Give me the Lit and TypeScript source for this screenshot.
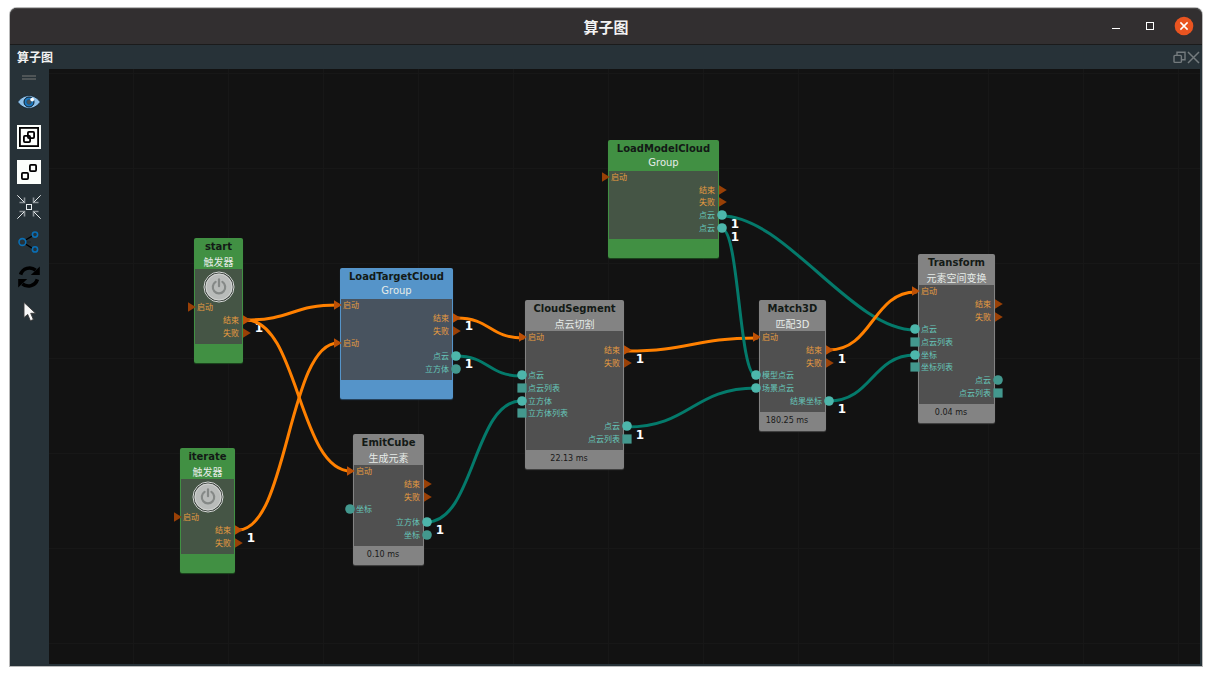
import { LitElement, html, svg, css, nothing } from "lit";
import { customElement, property } from "lit/decorators.js";
import { classMap } from "lit/directives/class-map.js";
import { styleMap } from "lit/directives/style-map.js";

type Side = "in" | "out";
type Shape = "flow" | "item" | "list";

interface Port {
  side: Side;
  shape: Shape;
  label: string;
  linked: boolean;
}

interface OperatorNode {
  x: number;
  y: number;
  width: number;
  theme: "green" | "blue" | "grey";
  name: string;
  kind: string;
  trigger?: boolean;
  time?: string;
  ports: Port[];
}

interface Wire {
  type: "flow" | "data";
  from: [number, number];
  to: [number, number];
}

const port = (side: Side, shape: Shape, label: string, linked = false): Port => ({ side, shape, label, linked });

const NODES: OperatorNode[] = [
  {
    x: 145, y: 169, width: 49, theme: "green", name: "start", kind: "触发器", trigger: true,
    ports: [port("in", "flow", "启动"), port("out", "flow", "结束", true), port("out", "flow", "失败")],
  },
  {
    x: 131, y: 379, width: 55, theme: "green", name: "iterate", kind: "触发器", trigger: true,
    ports: [port("in", "flow", "启动"), port("out", "flow", "结束", true), port("out", "flow", "失败")],
  },
  {
    x: 291, y: 199, width: 113, theme: "blue", name: "LoadTargetCloud", kind: "Group",
    ports: [
      port("in", "flow", "启动", true), port("out", "flow", "结束", true), port("out", "flow", "失败"),
      port("in", "flow", "启动", true), port("out", "item", "点云", true), port("out", "item", "立方体"),
    ],
  },
  {
    x: 304, y: 365, width: 71, theme: "grey", name: "EmitCube", kind: "生成元素", time: "0.10 ms",
    ports: [
      port("in", "flow", "启动", true), port("out", "flow", "结束"), port("out", "flow", "失败"),
      port("in", "item", "坐标"), port("out", "item", "立方体", true), port("out", "item", "坐标"),
    ],
  },
  {
    x: 476, y: 231, width: 99, theme: "grey", name: "CloudSegment", kind: "点云切割", time: "22.13 ms",
    ports: [
      port("in", "flow", "启动", true), port("out", "flow", "结束", true), port("out", "flow", "失败"),
      port("in", "item", "点云", true), port("in", "list", "点云列表"), port("in", "item", "立方体", true),
      port("in", "list", "立方体列表"), port("out", "item", "点云", true), port("out", "list", "点云列表"),
    ],
  },
  {
    x: 559, y: 71, width: 111, theme: "green", name: "LoadModelCloud", kind: "Group",
    ports: [
      port("in", "flow", "启动"), port("out", "flow", "结束"), port("out", "flow", "失败"),
      port("out", "item", "点云", true), port("out", "item", "点云", true),
    ],
  },
  {
    x: 710, y: 231, width: 67, theme: "grey", name: "Match3D", kind: "匹配3D", time: "180.25 ms",
    ports: [
      port("in", "flow", "启动", true), port("out", "flow", "结束", true), port("out", "flow", "失败"),
      port("in", "item", "模型点云", true), port("in", "item", "场景点云", true), port("out", "item", "结果坐标", true),
    ],
  },
  {
    x: 869, y: 185, width: 77, theme: "grey", name: "Transform", kind: "元素空间变换", time: "0.04 ms",
    ports: [
      port("in", "flow", "启动", true), port("out", "flow", "结束"), port("out", "flow", "失败"),
      port("in", "item", "点云", true), port("in", "list", "点云列表"), port("in", "item", "坐标", true),
      port("in", "list", "坐标列表"), port("out", "item", "点云"), port("out", "list", "点云列表"),
    ],
  },
];

const WIRES: Wire[] = [
  { type: "flow", from: [197, 251], to: [289, 236] },
  { type: "flow", from: [197, 251], to: [302, 402] },
  { type: "flow", from: [189, 461], to: [289, 274] },
  { type: "flow", from: [408, 249], to: [474, 269] },
  { type: "data", from: [407, 287], to: [472, 307] },
  { type: "data", from: [378, 453], to: [472, 332] },
  { type: "flow", from: [578, 282], to: [708, 269] },
  { type: "data", from: [578, 358], to: [707, 319] },
  { type: "data", from: [673, 147], to: [866, 261] },
  { type: "data", from: [673, 160], to: [707, 307] },
  { type: "flow", from: [780, 281], to: [867, 223] },
  { type: "data", from: [780, 332], to: [866, 286] },
];

const COUNTS: [number, number][] = [
  [210, 259], [202, 469], [420, 257], [420, 295], [391, 461], [591, 290],
  [591, 366], [686, 155], [686, 168], [793, 290], [793, 340],
];

const PORT_PITCH = 38 / 3;
const MAX_BEND = 63;

@customElement("operator-node")
class OperatorNodeElement extends LitElement {
  @property({ attribute: false }) data!: OperatorNode;

  static styles = css`
    :host { display: block; }
    .node {
      border-radius: 2px;
      background: var(--edge);
      box-shadow: 0 1px 1px var(--shade);
      display: flex;
      flex-direction: column;
    }
    .green { --edge: #419043; --fill: #455545; --shade: #1d4a1f; }
    .blue { --edge: #5594c9; --fill: #48535f; --shade: #2a4a66; }
    .grey { --edge: #838383; --fill: #505050; --shade: #464646; }
    .head {
      height: 31px;
      display: flex;
      flex-direction: column;
      align-items: center;
      white-space: nowrap;
      font-family: "DejaVu Sans", "Noto Sans CJK SC", sans-serif;
      font-size: 10px;
    }
    .name { margin: 0; padding-top: 2px; font-size: 10px; line-height: 14px; font-weight: 700; color: #131a16; }
    .kind { line-height: 14px; color: #e6ebe8; }
    .kind.cjk { line-height: 17px; }
    .body {
      margin: 0 1px;
      padding: 0 0 5px;
      background: var(--fill);
      display: flex;
      flex-direction: column;
      align-items: stretch;
    }
    .ports { list-style: none; margin: 0 -1px; padding: 0; display: grid; grid-auto-rows: 1fr; }
    .port { display: flex; align-items: center; min-height: 0; }
    .port.in { gap: 1px; margin-left: -8px; }
    .port.out { gap: 2px; flex-direction: row-reverse; margin-right: -8px; }
    .label {
      font-family: "Noto Sans CJK SC", sans-serif;
      font-size: 8px;
      line-height: 12px;
      white-space: nowrap;
      color: #66c6b9;
    }
    .flow .label { color: #e59b40; }
    .pin { display: block; width: 10px; height: 10px; flex: none; fill: #43988e; }
    .linked .pin { fill: #4db6ab; }
    .flow .pin { fill: #994006; }
    .flow.linked .pin { fill: #bd5005; }
    .power {
      align-self: center;
      margin: 2px 0 0;
      padding: 0;
      border: 0;
      background: none;
      width: 32px;
      height: 30px;
      display: flex;
      justify-content: center;
    }
    .power svg { width: 32px; height: 32px; flex: none; }
    .foot {
      height: 19px;
      padding-right: 11px;
      text-align: center;
      white-space: nowrap;
      font: 8px/18px "DejaVu Sans", sans-serif;
      color: #191919;
    }
  `;

  private pin(shape: Shape) {
    const glyph =
      shape === "flow"
        ? svg`<path d="M2 0.2L9.8 5L2 9.8z"/>`
        : shape === "item"
          ? svg`<circle cx="5" cy="5" r="4.8"/>`
          : svg`<path d="M0.4 0.4h9.2v9.2h-9.2z"/>`;
    return html`<svg class="pin" viewBox="0 0 10 10" aria-hidden="true">${glyph}</svg>`;
  }

  private power() {
    return html`<button class="power" aria-label=${this.data.name}>
      <svg viewBox="0 0 32 32" aria-hidden="true">
        <circle cx="16" cy="16" r="15" fill="#2c332e" stroke="#d9dcda" stroke-width="1"/>
        <circle cx="16" cy="16" r="13.6" fill="#a9aeaa"/>
        <circle cx="16" cy="16" r="13" fill="#b9bcba" stroke="#d2d4d2" stroke-width="1"/>
        <path d="M12.6 10.9a6.2 6.2 0 1 0 6.8 0" fill="none" stroke="#858987" stroke-width="2.2" stroke-linecap="round"/>
        <path d="M16 8.4v6.8" stroke="#858987" stroke-width="2.2" stroke-linecap="round"/>
      </svg>
    </button>`;
  }

  render() {
    const n = this.data;
    const cjk = n.kind !== "Group";
    return html`
      <article class="node ${n.theme}">
        <header class="head">
          <h2 class="name">${n.name}</h2>
          <span class=${classMap({ kind: true, cjk })}>${n.kind}</span>
        </header>
        <div class="body">
          ${n.trigger ? this.power() : nothing}
          <ul class="ports" style=${styleMap({ height: `${Math.round(n.ports.length * PORT_PITCH)}px` })}>
            ${n.ports.map(
              (p) => html`<li class=${classMap({ port: true, [p.side]: true, [p.shape]: true, linked: p.linked })}>
                ${this.pin(p.shape)}<span class="label">${p.label}</span>
              </li>`
            )}
          </ul>
        </div>
        <footer class="foot">${n.time ?? nothing}</footer>
      </article>
    `;
  }
}

@customElement("operator-graph")
class OperatorGraph extends LitElement {
  static styles = css`
    :host {
      display: block;
      position: relative;
      overflow: hidden;
      background-color: #121212;
      background-image:
        linear-gradient(to right, #171717 1px, transparent 1px),
        linear-gradient(to bottom, #171717 1px, transparent 1px);
      background-size: 95px 95px;
      background-position: 84px 4px;
    }
    .wires { position: absolute; inset: 0; width: 100%; height: 100%; }
    .wire { fill: none; stroke-width: 3; stroke-linecap: round; }
    .wire.flow { stroke: #ff8000; }
    .wire.data { stroke: #047a6b; }
    .count {
      position: absolute;
      transform: translate(-50%, -50%);
      font: 700 12px/14px "DejaVu Sans", sans-serif;
      color: #ffffff;
    }
    .slot { position: absolute; }
  `;

  private curve({ from: [x1, y1], to: [x2, y2] }: Wire) {
    const bend = Math.min((x2 - x1) / 2, MAX_BEND);
    return `M${x1} ${y1}C${x1 + bend} ${y1} ${x2 - bend} ${y2} ${x2} ${y2}`;
  }

  render() {
    return html`
      ${COUNTS.map(([x, y]) => html`<span class="count" style=${styleMap({ left: `${x}px`, top: `${y}px` })}>1</span>`)}
      <svg class="wires" aria-hidden="true">
        ${WIRES.map((w) => svg`<path class="wire ${w.type}" d=${this.curve(w)}/>`)}
      </svg>
      ${NODES.map(
        (n) => html`<operator-node
          class="slot"
          style=${styleMap({ left: `${n.x}px`, top: `${n.y}px`, width: `${n.width}px` })}
          .data=${n}
        ></operator-node>`
      )}
    `;
  }
}

const TOOLS = [
  {
    name: "显示",
    icon: svg`
      <path d="M0.6 12C4 7.6 8 5.6 12 5.6S20 7.6 23.4 12C20 16.4 16 18.4 12 18.4S4 16.4 0.6 12z" fill="#8fc0e8" stroke="#10202c" stroke-width="0.8"/>
      <circle cx="12" cy="12" r="5" fill="#1c78c0" stroke="#0d1c28" stroke-width="1"/>
      <circle cx="12" cy="12" r="2.4" fill="#4d5458" stroke="#14507e" stroke-width="0.6"/>
      <circle cx="15.2" cy="9.6" r="1.9" fill="#ffffff"/>`,
  },
  {
    name: "组合",
    icon: svg`
      <path d="M0 0h24v24H0z" fill="#fcfffc"/>
      <rect x="2.9" y="2.9" width="18.2" height="18.2" fill="none" stroke="#000" stroke-width="1.8"/>
      <rect x="6.9" y="10.9" width="6.2" height="6.2" rx="1" fill="none" stroke="#000" stroke-width="1.8"/>
      <rect x="10.9" y="6.9" width="6.2" height="6.2" rx="1" fill="none" stroke="#000" stroke-width="1.8"/>`,
  },
  {
    name: "解组",
    icon: svg`
      <path d="M0 0h24v24H0z" fill="#fcfffc"/>
      <rect x="4.9" y="12.9" width="6.2" height="6.2" rx="1" fill="none" stroke="#000" stroke-width="1.8"/>
      <rect x="12.9" y="4.9" width="6.2" height="6.2" rx="1" fill="none" stroke="#000" stroke-width="1.8"/>`,
  },
  {
    name: "居中",
    icon: svg`
      <path d="M7.5 2.5v5h-5M16.5 2.5v5h5M7.5 21.5v-5h-5M16.5 21.5v-5h5" fill="none" stroke="#8c9397" stroke-width="1.6"/>
      <g fill="none" stroke="#e8ecee" stroke-width="1">
        <rect x="9.5" y="9.5" width="5" height="5"/>
        <path d="M0.3 0.3l7 7M23.7 0.3l-7 7M0.3 23.7l7-7M23.7 23.7l-7-7"/>
      </g>`,
  },
  {
    name: "连接",
    icon: svg`
      <path d="M8.5 10l7-4.2M8.5 14l7 4.4" stroke="#000" stroke-width="1.4"/>
      <path d="M9.5 12h4.5" stroke="#10181c" stroke-width="1.2" stroke-dasharray="1 1"/>
      <g fill="none" stroke="#0a6fb5" stroke-width="1.6">
        <circle cx="5.4" cy="12" r="3.4"/>
        <circle cx="18" cy="4.6" r="2.6"/>
        <circle cx="18" cy="19.4" r="2.6"/>
      </g>`,
  },
  {
    name: "刷新",
    icon: svg`
      <path d="M3.6 9.6A9.4 9.4 0 0 1 18.6 5.2M20.4 14.4A9.4 9.4 0 0 1 5.4 18.8" fill="none" stroke="#000" stroke-width="3.6"/>
      <path d="M22.8 1.6V10h-9zM1.2 22.4V14h9z" fill="#000"/>`,
  },
  {
    name: "选择",
    icon: svg`
      <path d="M7 2.4v15.2l3.7-3.2 2.7 6.4 3-1.3-2.7-6.2h4.9z" fill="#f8f8f8" stroke="#3a3a3a" stroke-width="0.9" stroke-linejoin="round"/>`,
  },
];

@customElement("app-root")
class AppRoot extends LitElement {
  static styles = css`
    :host {
      display: block;
      box-sizing: border-box;
      height: 100vh;
      padding: 8px 10px 10px;
      background: #ffffff;
      font-family: "Noto Sans CJK SC", sans-serif;
      color: #f2f2f2;
    }
    .window {
      height: 100%;
      display: flex;
      flex-direction: column;
      background: #273238;
      border-radius: 7px 7px 0 0;
      box-shadow: 0 0 0 1px #b9b9b9;
    }
    .titlebar {
      height: 37px;
      box-sizing: border-box;
      border-bottom: 1px solid #1b1b1b;
      border-radius: 7px 7px 0 0;
      background: #322f30;
      box-shadow: inset 0 1px 0 #4b4949;
      display: grid;
      grid-template-columns: 1fr auto 1fr;
      align-items: center;
    }
    .title { grid-column: 2; margin: 0; font-size: 15px; line-height: 20px; font-weight: 700; padding-top: 2px; }
    .controls { display: flex; justify-content: flex-end; align-items: center; gap: 14px; padding-right: 8px; }
    button { padding: 0; border: 0; background: none; display: block; }
    .control { width: 20px; height: 20px; }
    .control svg { display: block; width: 20px; height: 20px; }
    .dockbar {
      height: 24px;
      display: flex;
      align-items: center;
      justify-content: space-between;
      padding: 0 2px 0 7px;
    }
    .docktitle { margin: 0; font-size: 12px; line-height: 18px; font-weight: 700; }
    .dockactions { display: flex; gap: 1px; }
    .dockaction svg { display: block; width: 13px; height: 13px; }
    .main { flex: 1; min-height: 0; display: flex; padding: 0 2px 2px 0; }
    .tools { width: 32px; padding-left: 7px; display: flex; flex-direction: column; }
    .grip { width: 14px; height: 5px; margin: 6px 5px 10px; box-sizing: border-box; border: solid #4f5557; border-width: 2px 0; }
    .toolset { display: flex; flex-direction: column; gap: 11px; }
    .tool svg { display: block; width: 24px; height: 24px; }
    .graph { flex: 1; min-width: 0; }
  `;

  render() {
    return html`
      <div class="window">
        <header class="titlebar">
          <h1 class="title">算子图</h1>
          <div class="controls">
            <button class="control" aria-label="最小化">
              <svg viewBox="0 0 20 20"><path d="M6 12.5h8" stroke="#fff" stroke-width="1"/></svg>
            </button>
            <button class="control" aria-label="最大化">
              <svg viewBox="0 0 20 20"><rect x="6.5" y="6.5" width="7" height="7" fill="none" stroke="#fff"/></svg>
            </button>
            <button class="control" aria-label="关闭">
              <svg viewBox="0 0 20 20">
                <circle cx="10" cy="10" r="9.3" fill="#e95420"/>
                <path d="M6.4 6.4l7.2 7.2M13.6 6.4l-7.2 7.2" stroke="#fff" stroke-width="1.5"/>
              </svg>
            </button>
          </div>
        </header>
        <div class="dockbar">
          <h2 class="docktitle">算子图</h2>
          <div class="dockactions">
            <button class="dockaction" aria-label="浮动">
              <svg viewBox="0 0 13 13" fill="none" stroke="#747b7e" stroke-width="1.4">
                <path d="M4 4V1.2h8v7.6H8.8"/>
                <rect x="1" y="4.4" width="7.4" height="7" rx="1"/>
              </svg>
            </button>
            <button class="dockaction" aria-label="关闭面板">
              <svg viewBox="0 0 13 13"><path d="M1 1l11 11M12 1L1 12" stroke="#747b7e" stroke-width="1.5"/></svg>
            </button>
          </div>
        </div>
        <main class="main">
          <nav class="tools" aria-label="工具">
            <div class="grip"></div>
            <div class="toolset">
              ${TOOLS.map(
                (t) => html`<button class="tool" aria-label=${t.name}>
                  <svg viewBox="0 0 24 24" aria-hidden="true">${t.icon}</svg>
                </button>`
              )}
            </div>
          </nav>
          <operator-graph class="graph"></operator-graph>
        </main>
      </div>
    `;
  }
}
